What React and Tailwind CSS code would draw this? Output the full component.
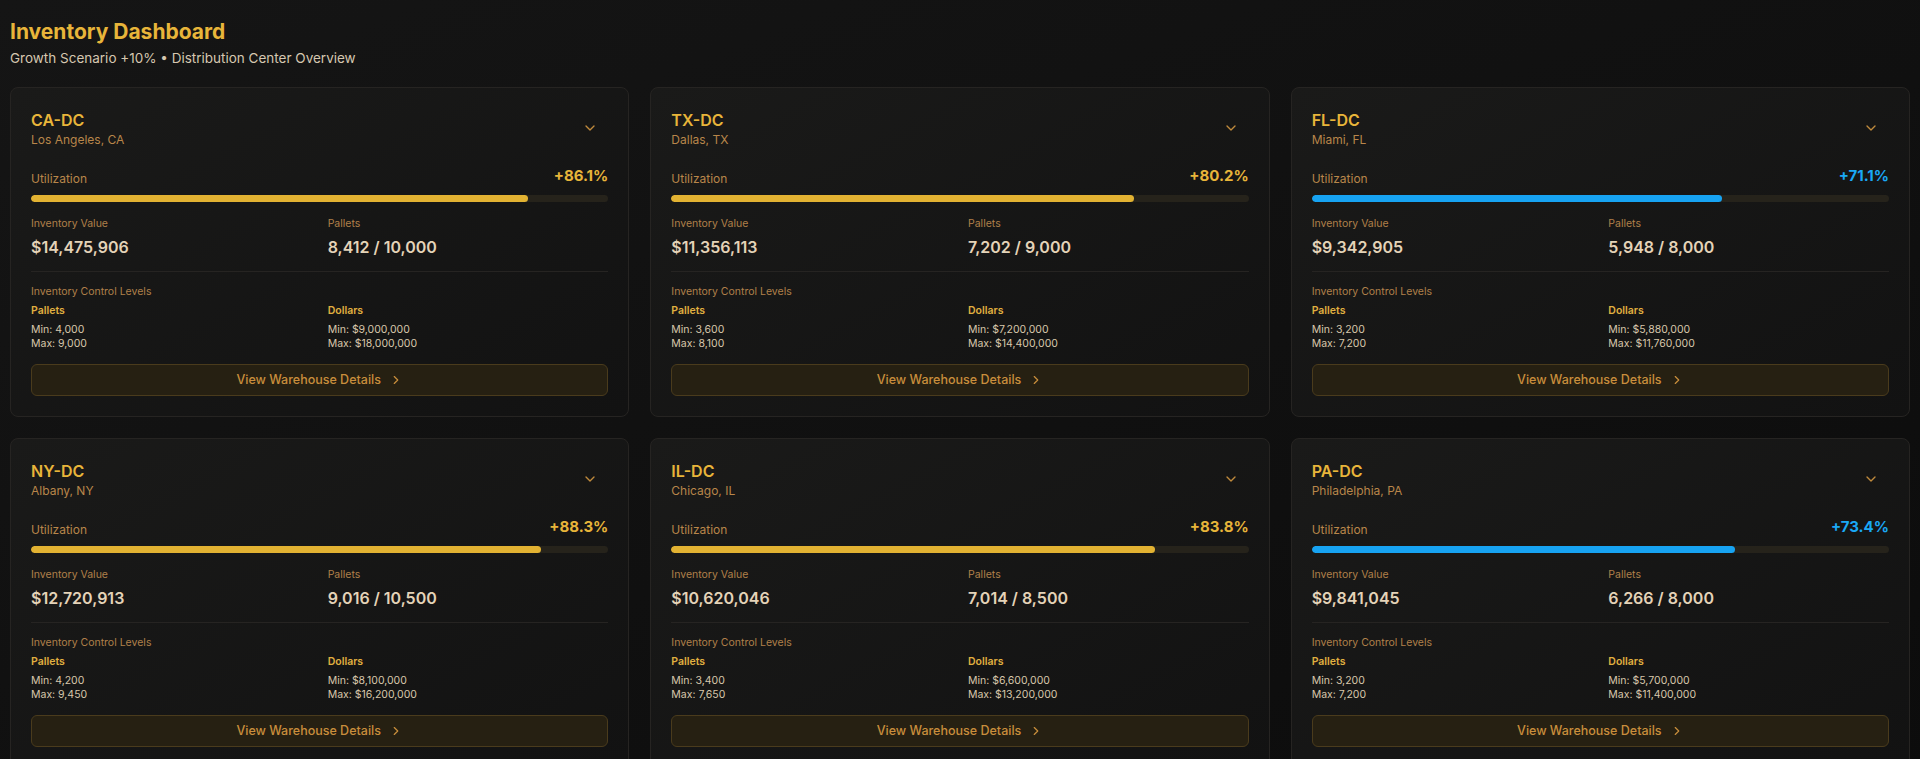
import { ChevronDown, ChevronRight } from "lucide-react";

const centers = [
  { id: "CA-DC", loc: "Los Angeles, CA", util: 86.1, value: "$14,475,906", pallets: "8,412 / 10,000", pMin: "4,000", pMax: "9,000", dMin: "$9,000,000", dMax: "$18,000,000" },
  { id: "TX-DC", loc: "Dallas, TX", util: 80.2, value: "$11,356,113", pallets: "7,202 / 9,000", pMin: "3,600", pMax: "8,100", dMin: "$7,200,000", dMax: "$14,400,000" },
  { id: "FL-DC", loc: "Miami, FL", util: 71.1, value: "$9,342,905", pallets: "5,948 / 8,000", pMin: "3,200", pMax: "7,200", dMin: "$5,880,000", dMax: "$11,760,000" },
  { id: "NY-DC", loc: "Albany, NY", util: 88.3, value: "$12,720,913", pallets: "9,016 / 10,500", pMin: "4,200", pMax: "9,450", dMin: "$8,100,000", dMax: "$16,200,000" },
  { id: "IL-DC", loc: "Chicago, IL", util: 83.8, value: "$10,620,046", pallets: "7,014 / 8,500", pMin: "3,400", pMax: "7,650", dMin: "$6,600,000", dMax: "$13,200,000" },
  { id: "PA-DC", loc: "Philadelphia, PA", util: 73.4, value: "$9,841,045", pallets: "6,266 / 8,000", pMin: "3,200", pMax: "7,200", dMin: "$5,700,000", dMax: "$11,400,000" },
];

const Card = ({ c }) => {
  const high = c.util >= 80;
  return (
    <div className="rounded-lg border border-[#262422] bg-gradient-to-br from-[#1a1a19] to-[#121212] px-5 pt-[22px] pb-5">
      <div className="flex items-start justify-between">
        <div>
          <h3 className="text-[16px] font-semibold leading-5 text-[#e8b53a]">{c.id}</h3>
          <p className="text-[12px] leading-4 mt-[2px] text-[#b8864a]">{c.loc}</p>
        </div>
        <ChevronDown className="w-4 h-4 mt-[10px] mr-[10px] text-[#c08a3c]" />
      </div>
      <div className="flex items-end justify-between mt-[17px]">
        <span className="text-[12px] text-[#b8864a]">Utilization</span>
        <span className={`text-[15px] font-bold ${high ? "text-[#e8b53a]" : "text-[#1aa8f5]"}`}>+{c.util}%</span>
      </div>
      <div className="h-[7px] mt-[7px] rounded-full bg-[#26231b] overflow-hidden">
        <div className={`h-full rounded-full ${high ? "bg-[#e2b232]" : "bg-[#17a3f2]"}`} style={{ width: `${c.util}%` }} />
      </div>
      <div className="grid grid-cols-2 gap-x-4 mt-[14px] pb-[12px] border-b border-[#262422]">
        <div>
          <p className="text-[10.5px] text-[#b0804a]">Inventory Value</p>
          <p className="text-[16px] font-semibold mt-[3px] text-[#e4d3b8]">{c.value}</p>
        </div>
        <div>
          <p className="text-[10.5px] text-[#b0804a]">Pallets</p>
          <p className="text-[16px] font-semibold mt-[3px] text-[#e4d3b8]">{c.pallets}</p>
        </div>
      </div>
      <p className="text-[10.5px] mt-[12px] text-[#b0804a]">Inventory Control Levels</p>
      <div className="grid grid-cols-2 gap-x-4 mt-[5px] text-[10.5px] leading-[14px]">
        <div>
          <p className="font-semibold text-[#e0b040] mb-[5px]">Pallets</p>
          <p className="text-[#d8c7ab]">Min: {c.pMin}</p>
          <p className="text-[#d8c7ab]">Max: {c.pMax}</p>
        </div>
        <div>
          <p className="font-semibold text-[#e0b040] mb-[5px]">Dollars</p>
          <p className="text-[#d8c7ab]">Min: {c.dMin}</p>
          <p className="text-[#d8c7ab]">Max: {c.dMax}</p>
        </div>
      </div>
      <button className="mt-[13px] w-full h-[32px] flex items-center justify-center gap-2 rounded-md border border-[#4a3b1c] bg-[#262012] text-[12.5px] font-medium text-[#c98e3c]">
        View Warehouse Details <ChevronRight className="w-[14px] h-[14px]" />
      </button>
    </div>
  );
};

export default function App() {
  return (
    <div className="min-h-screen bg-gradient-to-br from-[#151515] to-[#0c0c0c] px-[10px] pt-[18px] pb-2" style={{ fontFamily: "Inter, 'Noto Sans', sans-serif" }}>
      <h1 className="text-[21px] font-bold leading-7 text-[#e8b53a]">Inventory Dashboard</h1>
      <p className="text-[13.5px] mt-[2px] text-[#d6c7b0]">Growth Scenario +10% • Distribution Center Overview</p>
      <div className="grid grid-cols-3 gap-x-[21px] gap-y-[21px] mt-[19px]">
        {centers.map((c) => (
          <Card key={c.id} c={c} />
        ))}
      </div>
    </div>
  );
}
